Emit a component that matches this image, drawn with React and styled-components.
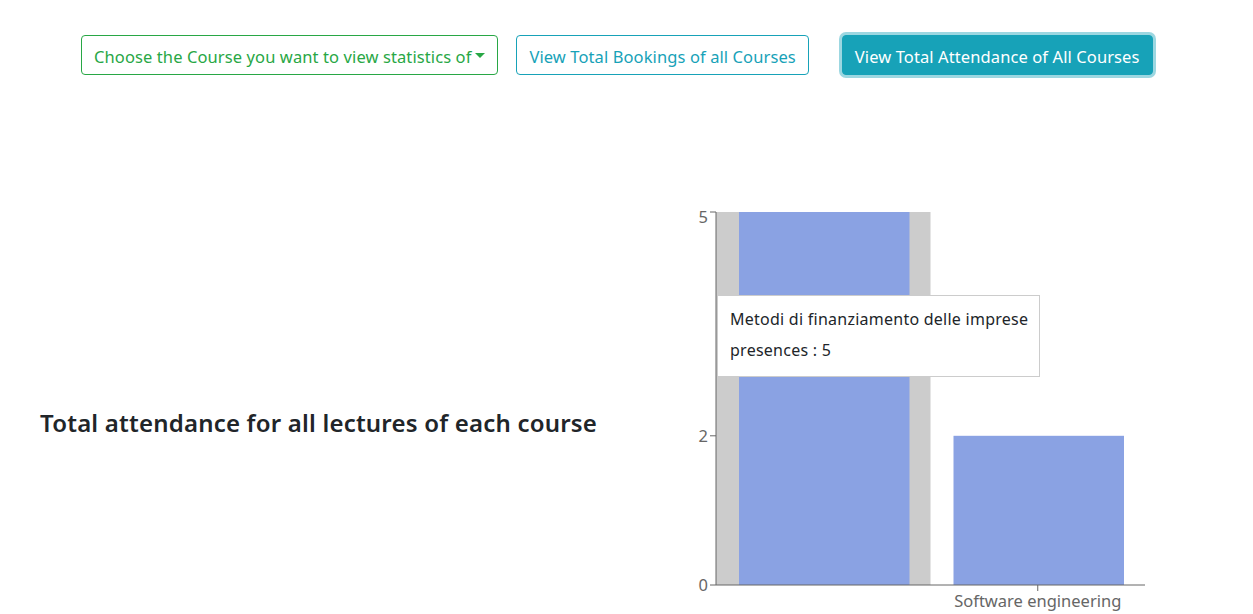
import styled, { createGlobalStyle } from 'styled-components';

const GlobalStyle = createGlobalStyle`
  body {
    margin: 0;
    background: #fff;
    font-family: 'Noto Sans', 'Open Sans', sans-serif;
    font-size: 16px;
    color: #212529;
    overflow: hidden;
  }
`;

const courses = [
  { name: 'Metodi di finanziamento delle imprese', presences: 5 },
  { name: 'Software engineering', presences: 2 },
];

export default function App() {
  return (
    <>
      <GlobalStyle />
      <Page>
        <Toolbar>
          <Button variant="success">
            Choose the Course you want to view statistics of
            <Caret />
          </Button>
          <Button variant="info">View Total Bookings of all Courses</Button>
          <Button variant="info" active gapLeft={33}>
            View Total Attendance of All Courses
          </Button>
        </Toolbar>
        <Content>
          <TitleColumn>
            <Title>Total attendance for all lectures of each course</Title>
          </TitleColumn>
          <ChartColumn>
            <AttendanceChart data={courses} />
          </ChartColumn>
        </Content>
      </Page>
    </>
  );
}

function AttendanceChart({ data }) {
  const left = 70;
  const right = 499;
  const top = 12;
  const bottom = 385;
  const max = 5;
  const band = (right - left) / data.length;
  const y = (v) => bottom - ((bottom - top) * v) / max;

  return (
    <ChartWrapper>
      <svg width="500" height="414">
        <rect x={left} y={top} width={band} height={bottom - top} fill="#cccccc" />
        {data.map((d, i) => {
          const bx = left + i * band + 23;
          return (
            <rect key={d.name} x={bx} y={y(d.presences)} width={band - 44} height={bottom - y(d.presences)} fill="#8aa2e3" />
          );
        })}
        <line x1={left} y1={top} x2={left} y2={bottom} stroke="#666" />
        <line x1={left} y1={bottom} x2={right} y2={bottom} stroke="#666" />
        {[0, 2, 5].map((v) => (
          <g key={v}>
            <line x1={left - 6} y1={y(v)} x2={left} y2={y(v)} stroke="#666" />
            <text
              x={left - 8}
              y={y(v) + (v === max ? 5 : 0)}
              dy="0.355em"
              textAnchor="end"
              fill="#666"
              fontSize="16.5"
            >
              {v}
            </text>
          </g>
        ))}
        <line x1={left + band * 1.5} y1={bottom} x2={left + band * 1.5} y2={bottom + 6} stroke="#666" />
        <text x={left + band * 1.5} y={bottom + 16} dy="0.35em" textAnchor="middle" fill="#666" fontSize="16.5">
          {data[1].name}
        </text>
      </svg>
      <Tooltip>
        <TooltipLabel>{data[0].name}</TooltipLabel>
        <TooltipItem>presences : {data[0].presences}</TooltipItem>
      </Tooltip>
    </ChartWrapper>
  );
}

const Page = styled.div`
  width: 1253px;
  height: 614px;
`;

const Toolbar = styled.div`
  display: flex;
  align-items: center;
  gap: 18px;
  padding: 35px 0 0 81px;
`;

const colors = {
  success: '#28a745',
  info: '#17a2b8',
};

const Button = styled.button`
  display: inline-flex;
  align-items: center;
  height: 40px;
  padding: 8px 12px 5px;
  margin-left: ${(p) => (p.gapLeft ? `${p.gapLeft - 18}px` : '0')};
  font-family: inherit;
  font-size: 16.5px;
  letter-spacing: 0.1px;
  line-height: 24px;
  border-radius: 4px;
  border: 1px solid ${(p) => colors[p.variant]};
  color: ${(p) => (p.active ? '#fff' : colors[p.variant])};
  background: ${(p) => (p.active ? colors[p.variant] : '#fff')};
  box-shadow: ${(p) => (p.active ? '0 0 0 3px rgba(58, 176, 195, 0.5)' : 'none')};
  cursor: pointer;
  white-space: nowrap;
`;

const Caret = styled.span`
  display: inline-block;
  margin-left: 4px;
  width: 0;
  height: 0;
  border-top: 5px solid #28a745;
  border-left: 5px solid transparent;
  border-right: 5px solid transparent;
  transform: translateY(-1px);
`;

const Content = styled.div`
  display: flex;
  margin-top: 125px;
`;

const TitleColumn = styled.div`
  width: 646px;
  display: flex;
  align-items: center;
  padding: 32px 0 0 40px;
  box-sizing: border-box;
`;

const Title = styled.h4`
  margin: 0;
  font-size: 24px;
  font-weight: 600;
  letter-spacing: 0.2px;
  line-height: 1.2;
  color: #212529;
`;

const ChartColumn = styled.div`
  flex: 1;
`;

const ChartWrapper = styled.div`
  position: relative;
  width: 500px;
  height: 414px;
`;

const Tooltip = styled.div`
  position: absolute;
  left: 71px;
  top: 95px;
  width: 323px;
  box-sizing: border-box;
  padding: 11px 12px 10px;
  background: #fff;
  border: 1px solid #ccc;
  white-space: nowrap;
  letter-spacing: 0.25px;
`;

const TooltipLabel = styled.p`
  margin: 0;
  line-height: 24px;
`;

const TooltipItem = styled.div`
  padding: 7px 0 4px;
  line-height: 24px;
`;
